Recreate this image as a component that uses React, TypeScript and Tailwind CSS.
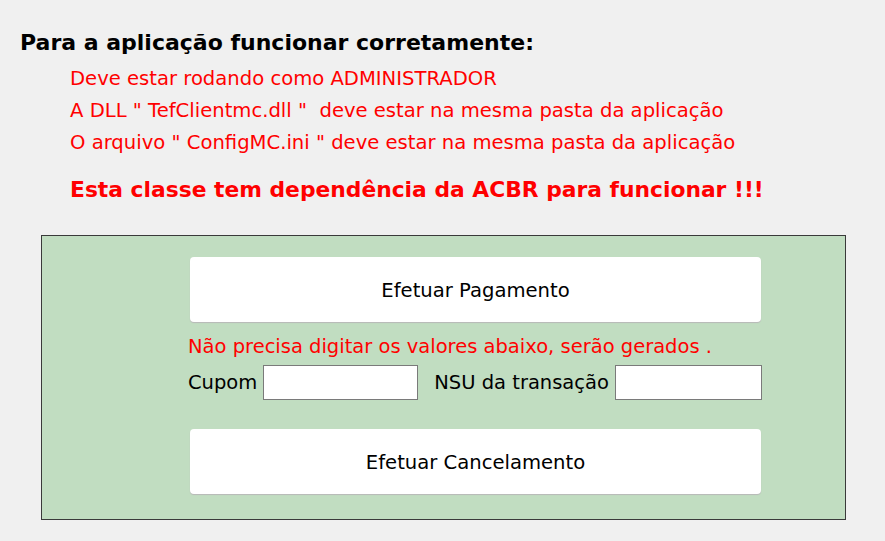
export default function App() {
  return (
    <div
      className="w-[885px] h-[541px] bg-[#f0f0f0] overflow-hidden"
      style={{ fontFamily: 'Tahoma, "DejaVu Sans", sans-serif' }}
    >
      <div className="pt-[30px] pl-[20px]">
        <h1 className="text-[22px] leading-[26px] font-bold text-black">
          Para a aplicação funcionar corretamente:
        </h1>
        <div className="pl-[50px] mt-[7px] text-[19.6px] leading-[32px] text-[#ff0000]">
          <p>Deve estar rodando como ADMINISTRADOR</p>
          <p>A DLL " TefClientmc.dll "&nbsp; deve estar na mesma pasta da aplicação</p>
          <p>O arquivo " ConfigMC.ini " deve estar na mesma pasta da aplicação</p>
          <p className="mt-[18px] text-[21.8px] leading-[26px] font-bold">
            Esta classe tem dependência da ACBR para funcionar !!!
          </p>
        </div>
      </div>

      <div className="ml-[41px] mt-[32px] w-[805px] h-[285px] bg-[#c1ddc1] border border-[#3a3a3a] pl-[148px] pt-[21px]">
        <button className="w-[571px] h-[65px] pt-[2px] bg-white rounded-[4px] shadow-[0_1px_1px_#b8b8b8] text-[19.6px] text-black">
          Efetuar Pagamento
        </button>
        <p className="mt-[13px] -ml-[2px] text-[19.5px] leading-[24px] text-[#ff0000]">
          Não precisa digitar os valores abaixo, serão gerados .
        </p>
        <div className="flex items-center h-[35px] mt-[6px] -ml-[2px] text-[19.5px] text-black">
          <span>Cupom</span>
          <input className="ml-[6px] w-[155px] h-[35px] bg-white border border-[#7a7a7a] outline-none" />
          <span className="ml-[16px]">NSU da transação</span>
          <input className="ml-[6px] w-[147px] h-[35px] bg-white border border-[#7a7a7a] outline-none" />
        </div>
        <button className="mt-[29px] w-[571px] h-[65px] pt-[2px] bg-white rounded-[4px] shadow-[0_1px_1px_#b8b8b8] text-[19.6px] text-black">
          Efetuar Cancelamento
        </button>
      </div>
    </div>
  );
}
